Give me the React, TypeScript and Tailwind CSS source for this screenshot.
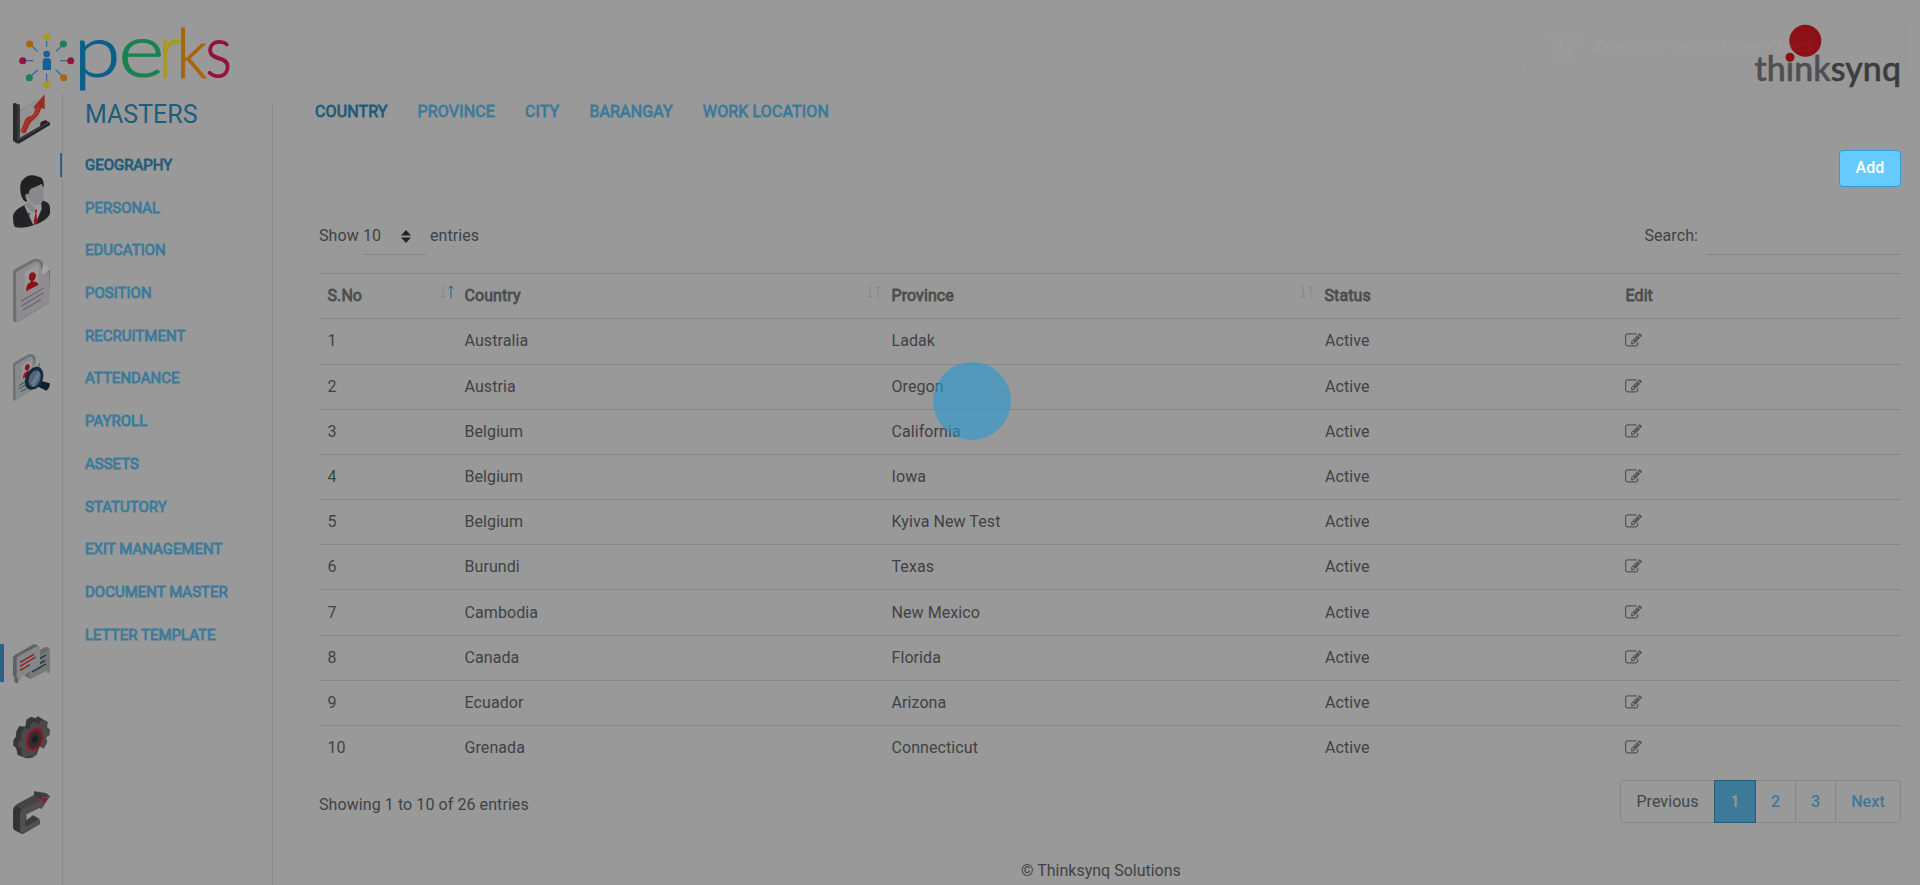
import React from "react";

const fauxBold = "[-webkit-text-stroke:0.8px_currentColor]";

const menu = [
  "GEOGRAPHY", "PERSONAL", "EDUCATION", "POSITION", "RECRUITMENT", "ATTENDANCE",
  "PAYROLL", "ASSETS", "STATUTORY", "EXIT MANAGEMENT", "DOCUMENT MASTER", "LETTER TEMPLATE",
];

const tabs = ["COUNTRY", "PROVINCE", "CITY", "BARANGAY", "WORK LOCATION"];

const rows = [
  ["Australia", "Ladak"],
  ["Austria", "Oregon"],
  ["Belgium", "California"],
  ["Belgium", "Iowa"],
  ["Belgium", "Kyiva New Test"],
  ["Burundi", "Texas"],
  ["Cambodia", "New Mexico"],
  ["Canada", "Florida"],
  ["Ecuador", "Arizona"],
  ["Grenada", "Connecticut"],
];

function PerksLogo() {
  const spokes = [
    { x: 140, y: 111, c: "#a89a1c", x1: 140, y1: 122, x2: 140, y2: 140 },
    { x: 190, y: 132, c: "#1a8250", x1: 184, y1: 139, x2: 168, y2: 154 },
    { x: 212, y: 182, c: "#93123c", x1: 204, y1: 182, x2: 180, y2: 182 },
    { x: 191, y: 233, c: "#a8650a", x1: 184, y1: 226, x2: 167, y2: 209 },
    { x: 140, y: 255, c: "#a89a1c", x1: 140, y1: 245, x2: 140, y2: 221 },
    { x: 88, y: 233, c: "#1a8250", x1: 95, y1: 226, x2: 113, y2: 210 },
    { x: 68, y: 182, c: "#93123c", x1: 76, y1: 182, x2: 100, y2: 182 },
    { x: 89, y: 132, c: "#a8650a", x1: 97, y1: 139, x2: 112, y2: 154 },
  ];
  return (
    <svg width="240" height="94" viewBox="0 0 240 94" className="block">
      <g transform="scale(0.33333)">
        {spokes.map((s, i) => (
          <g key={i}>
            <line x1={s.x1} y1={s.y1} x2={s.x2} y2={s.y2} stroke="#28659b" strokeWidth="3.5" />
            <circle cx={s.x} cy={s.y} r="10.5" fill={s.c} />
          </g>
        ))}
        <circle cx="140" cy="162" r="10" fill="#1b5f96" />
        <path d="M128 210V184q0-9 9-9h7q9 0 9 9v26z" fill="#155f94" />
      </g>
      <g fontFamily="Lato, sans-serif" fontWeight="300" fontSize="75" strokeWidth="1.1">
        <text transform="translate(73.800 76.800) scale(1.13 0.98)" fill="#0b5f8b" stroke="#0b5f8b">p</text>
        <text transform="translate(118.200 77) scale(1.18 1)" fill="#1a8250" stroke="#1a8250">e</text>
        <text transform="translate(158.500 77) scale(0.84 1)" fill="#a89a1c" stroke="#a89a1c">r</text>
        <text transform="translate(176.200 77.500) scale(0.86 0.93)" fill="#a8650a" stroke="#a8650a">k</text>
        <text transform="translate(205.300 77) scale(0.84 0.98)" fill="#93123c" stroke="#93123c">s</text>
      </g>
    </svg>
  );
}

function ThinksynqLogo() {
  return (
    <svg width="150" height="70" viewBox="1752 20 150 70" className="block">
      <text x="1754.500" y="81" fontFamily="Lato, sans-serif" fontSize="34.500" fontWeight="500" textLength="146.500" lengthAdjust="spacingAndGlyphs" strokeWidth="0.6">
        <tspan fill="#4f4f51" stroke="#4f4f51">think</tspan>
        <tspan fill="#3c3c3e" stroke="#3c3c3e">synq</tspan>
      </text>
      <circle cx="1805.300" cy="40.700" r="16" fill="#8e1017" />
      <circle cx="1790" cy="57.300" r="4.500" fill="#8e1017" />
    </svg>
  );
}

function ChartIcon() {
  return (
    <svg width="37" height="50" viewBox="39 282 111 150" className="block">
      <path d="M58 332 120 296V372L58 410z" fill="#929294" />
      <path d="M58 332 108 303" stroke="#808082" strokeWidth="2" />
      <path d="M39 312 44 308 58 315V413L52 431 39 422z" fill="#2a292b" />
      <path d="M52 316 60 313V411L52 419z" fill="#3b3a3c" />
      <path d="M52 418 120 378 122 366 136 360 150 368V375L55 432z" fill="#252426" />
      <path d="M54 420 148 367" stroke="#3d3c3e" strokeWidth="5" />
      <path d="M62 392C72 373 74 351 86 350S101 341 106 328L100 322 134 283V328L124 324C119 344 107 355 97 363S84 387 77 398Q67 404 62 392z" fill="#9a2e26" />
      <path d="M67 396C77 374 79 361 90 357S110 344 116 322" fill="none" stroke="#ac382d" strokeWidth="5" />
    </svg>
  );
}

function PersonIcon() {
  return (
    <svg width="37" height="53" viewBox="39 525 111 159" className="block">
      <path d="M39 648Q40 631 74 615L101 628 126 601Q150 607 150 623V641Q143 660 103 675 72 687 45 681 39 674 39 648z" fill="#232224" />
      <path d="M73 617 84 606 123 597 125 627 105 675 98 672z" fill="#9b9a9d" />
      <path d="M73 617 98 671 88 647 91 640 83 638z" fill="#3c3b3e" />
      <path d="M76 584Q82 570 91 570L126 545 131 555V598Q121 620 103 615L87 604V591L76 594z" fill="#89898c" />
      <path d="M64 587C59 570 59 547 68 540Q82 522 107 527L115 530Q130 530 131 553V563Q126 554 124 551C106 564 96 560 88 572L85 583Q76 578 76 591L82 604Q72 608 64 587z" fill="#202021" />
      <path d="M74 614 87 606 105 625 97 638z" fill="#858588" />
      <path d="M104 630 111 627 109 641 113 667 103 674 101 666 106 641z" fill="#971a1d" />
    </svg>
  );
}

function DocumentIcon() {
  return (
    <svg width="37" height="65" viewBox="39 55 111 195" className="block">
      <path d="M39 100Q38 94 45 88L101 58Q121 53 130 72L150 88 147 190 51 248Q43 249 39 244z" fill="#717173" />
      <path d="M48 103Q48 98 54 94L105 66Q123 62 124 92L147 100V189L49 247z" fill="#8e8c8e" />
      <path d="M124 102Q135 107 150 88L130 69z" fill="#a3a2a5" />
      <path d="M74 96 116 73V134L74 157z" fill="#999" />
      <ellipse cx="97" cy="111" rx="10" ry="13" transform="rotate(18 97 111)" fill="#8d1218" />
      <path d="M78 155Q78 133 91 128L96 119 99 126Q113 123 115 136z" fill="#8d1218" />
      <path d="M63 185 131 145M63 200 131 159M69 211 123 179" stroke="#515153" strokeWidth="2.600" />
    </svg>
  );
}

function InspectIcon() {
  return (
    <svg width="37" height="47" viewBox="39 342 111 141" className="block">
      <path d="M39 374Q39 370 45 366L86 343Q104 339 108 357L120 366V434L47 481Q42 484 39 478z" fill="#6d7173" />
      <path d="M45 376 87 350Q101 346 102 371L119 378V436L47 480z" fill="#858b8d" />
      <path d="M106 377Q113 379 120 366L107 354z" fill="#989ea0" />
      <path d="M65 376 96 358V405L65 421z" fill="#959799" />
      <ellipse cx="82" cy="382" rx="7" ry="10" transform="rotate(16 82 382)" fill="#8f151a" />
      <path d="M69 416Q69 399 78 396L85 391 89 405z" fill="#8f151a" />
      <path d="M57 437 76 426M57 446 80 433M63 455 79 446" stroke="#244650" strokeWidth="2.500" />
      <path d="M122 422 149 430Q151 443 139 452L112 439z" fill="#10202b" />
      <ellipse cx="104" cy="414" rx="25" ry="35" transform="rotate(20 104 414)" fill="#172d3b" />
      <ellipse cx="98" cy="418" rx="22" ry="32" transform="rotate(20 98 418)" fill="#132735" />
      <ellipse cx="104" cy="416" rx="17" ry="26" transform="rotate(20 104 416)" fill="#52657a" />
      <path d="M93 430 114 394 121 403 101 440z" fill="#6b7a8f" />
    </svg>
  );
}

function MessagesIcon() {
  return (
    <svg width="37" height="40" viewBox="39 12 111 120" className="block">
      <path d="M75 62 132 22 145 22 150 29V89L146 101 138 92 91 117 75 109z" fill="#6b6c6d" />
      <path d="M84 66 150 28V88L147 100 138 92 90 116z" fill="#777879" />
      <path d="M96 96 138 72M119 71 135 62M119 56 138 45" stroke="#1b3142" strokeWidth="4" />
      <path d="M39 53Q40 48 45 45L101 13Q108 11 116 19L54 115V131L43 125V112L39 106z" fill="#606162" />
      <path d="M50 57Q50 51 55 48L113 18Q120 15 120 25V76L67 107 54 128V113H50z" fill="#83898a" />
      <path d="M60 67 102 43M60 79 107 51M60 91 90 74" stroke="#961a20" strokeWidth="4" />
    </svg>
  );
}

function GearIcon() {
  return (
    <svg width="37" height="43" viewBox="39 228 111 129" className="block">
      <path d="M48 289 49 274 58 258 76 260 79 239 94 230 106 235 114 229 128 238 143 246 141 262 150 269 148 284 138 291 141 306 133 322 119 319 110 344 95 353 79 355 53 345 49 325 39 316 41 300z" fill="#383738" />
      <path d="M65 300 62 282 75 262 88 267 96 248 107 246 114 252 124 239 142 247 139 264 150 269 147 287 137 291 140 310 131 326 118 319 109 344 98 353 91 345 76 355 64 345 66 326 55 322 55 303z" fill="#4b494a" />
      <path d="M75 260 89 267M112 250 121 248M55 303 41 302M64 326 49 326" stroke="#302f30" strokeWidth="3" />
      <ellipse cx="104" cy="298" rx="24" ry="35" transform="rotate(20 104 298)" fill="#93151b" />
      <ellipse cx="104" cy="298" rx="18" ry="27" transform="rotate(20 104 298)" fill="#302f30" />
      <path d="M95 296 105 286 114 291 113 301 104 310 96 305z" fill="#1e1d1e" />
    </svg>
  );
}

function ReturnIcon() {
  return (
    <svg width="37" height="43" viewBox="39 453 111 129" className="block">
      <path d="M39 510Q40 500 50 493L102 465V454L138 459 150 469 123 507 119 503 79 523V553L105 536 120 542V552L73 580Q66 584 60 579L42 569Q39 565 39 561z" fill="#454344" />
      <path d="M39 512Q42 501 50 498L64 508Q60 514 60 522V578L43 570 39 562z" fill="#343334" />
      <path d="M60 524Q62 508 75 504L125 479V503L119 501 78 521Q75 524 75 531V555L119 537V552L72 580 60 577z" fill="#524f51" />
      <path d="M75 544 99 526 119 537 77 560z" fill="#3d3b3c" />
      <path d="M102 454 148 470 124 477 103 466z" fill="#3d3b3c" />
      <path d="M125 472 150 469 125 507z" fill="#555" />
      <path d="M127 475 143 473 128 496z" fill="#98161c" />
    </svg>
  );
}

function EditIcon() {
  return (
    <svg width="17" height="17" viewBox="0 0 1792 1792" fill="#545454" className="-mt-px block">
      <path d="M888 1184l116-116-152-152-116 116v56h96v96h56zm440-720q-16-16-33 1l-350 350q-17 17-1 33t33-1l350-350q17-17 1-33zm80 594v190q0 119-84.500 203.500t-203.500 84.500h-832q-119 0-203.500-84.500t-84.500-203.500v-832q0-119 84.500-203.500t203.500-84.500h832q63 0 117 25 15 7 18 23 3 17-9 29l-49 49q-14 14-32 8-23-6-45-6h-832q-66 0-113 47t-47 113v832q0 66 47 113t113 47h832q66 0 113-47t47-113v-126q0-13 9-22l64-64q15-15 35-7t20 29zm-96-738l288 288-672 672h-288v-288zm444 132l-92 92-288-288 92-92q28-28 68-28t68 28l152 152q28 28 28 68t-28 68z" />
    </svg>
  );
}

function SortArrows({ asc = false }: { asc?: boolean }) {
  return (
    <svg width="14" height="14" viewBox="0 0 14 14" fill="none" className="mr-[2px] mt-[11px] self-start">
      <path d="M3 0.500V12.500M0.500 10.500 3 13 5.500 10.500" stroke="#858585" />
      <path d="M11 13.500V1.500M8.500 3.500 11 1 13.500 3.500" stroke={asc ? "#1b678f" : "#858585"} />
    </svg>
  );
}

const grid = "grid grid-cols-[137px_427px_433px_301px_284px] items-center";

function DataTable() {
  return (
    <div className="mt-[18.150px] w-[1582px]">
      <div className={`${grid} h-[45.200px] border-t border-[#85888a] text-[#4d4d4d]`}>
        {["S.No", "Country", "Province", "Status", "Edit"].map((h, i) => (
          <div key={h} className="flex h-full items-center justify-between pl-[8.500px]">
            <span className={fauxBold}>{h}</span>
            {i < 3 && <SortArrows asc={i === 0} />}
          </div>
        ))}
      </div>
      {rows.map(([country, province], i) => (
        <div key={i} className={`${grid} h-[45.200px] border-t border-[#85888a]`}>
          <span className="pl-[8.500px]">{i + 1}</span>
          <span className="pl-[8.500px]">{country}</span>
          <span className="pl-[8.500px]">{province}</span>
          <span className="pl-[9px]">Active</span>
          <span className="pl-[7.500px]"><EditIcon /></span>
        </div>
      ))}
    </div>
  );
}

export default function App() {
  return (
    <div className="relative flex h-[885px] w-full flex-col overflow-hidden bg-[#999] font-['Roboto',sans-serif] text-base tracking-[0.08px] text-[#3f4244]">
      <header className="flex h-[94px] shrink-0 justify-between">
        <PerksLogo />
        <div className="pr-[18px] pt-5"><ThinksynqLogo /></div>
      </header>

      <div className="flex min-h-0 flex-1">
        <nav className="flex w-[63px] shrink-0 flex-col border-r border-[#8b8b8c] pl-[13px]">
          <ChartIcon />
          <div className="mt-[31px]"><PersonIcon /></div>
          <div className="mt-[30px]"><DocumentIcon /></div>
          <div className="mt-[31px]"><InspectIcon /></div>
          <div className="-ml-[13px] mt-[243px] flex h-10 gap-[9px]">
            <div className="h-[38px] w-1 bg-[#2d6485]" />
            <MessagesIcon />
          </div>
          <div className="mt-8"><GearIcon /></div>
          <div className="mt-8"><ReturnIcon /></div>
        </nav>

        <aside className="mt-[9px] w-[210px] shrink-0 border-r border-[#8b8b8c] tracking-normal">
          <h1 className="ml-[22px] mt-[-4px] h-[32px] text-[25px] leading-8 text-[#1f5c7a]">MASTERS</h1>
          <ul className="mt-[12.700px]">
            {menu.map((m, i) => (
              <li key={m} className={`relative flex h-[42.730px] items-center pl-[22px] text-[15px] ${fauxBold} ${i === 0 ? "text-[#1f5c7a]" : "text-[#3d7a99]"}`}>
                {i === 0 && <span className="absolute -left-[3px] top-[9.300px] h-6 w-0.5 bg-[#2d6485]" />}
                {m}
              </li>
            ))}
          </ul>
        </aside>

        <main className="flex min-w-0 flex-1 flex-col">
          <div className="ml-[42px] mt-[6px] flex h-6 items-center gap-[30px] tracking-[0.14px]">
            {tabs.map((t, i) => (
              <span key={t} className={`${fauxBold} ${i === 0 ? "text-[#1f5c7a]" : "text-[#3d7a99]"}`}>{t}</span>
            ))}
          </div>
          <div className="mt-[26px] flex justify-end pr-[19px]">
            <button className="h-[37px] w-[62px] rounded border border-[#3399d1] bg-[#66ccff] pb-px font-medium text-white">Add</button>
          </div>

          <div className="ml-[46px] mt-[30px] flex h-[38px] w-[1582px] justify-between">
            <div className="flex">
              <span className="w-11 leading-[38px]">Show</span>
              <div className="flex w-[63px] items-center justify-between border-b border-[#858585] pr-[15px] pt-px">
                <span>10</span>
                <svg width="10" height="13" viewBox="0 0 10 13" fill="#20252a"><path d="M0 5.500 5 0l5 5.500zM0 7.500h10L5 13z" /></svg>
              </div>
              <span className="pl-1 leading-[38px]">entries</span>
            </div>
            <div className="flex">
              <span className="leading-[38px]">Search:</span>
              <div className="ml-2 w-[195px] border-b border-[#858585]" />
            </div>
          </div>

          <div className="ml-[46px]">
            <DataTable />
            <div className="mt-[9.350px] flex w-[1582px] justify-between">
              <span className="mt-[13px] h-6 leading-6">Showing 1 to 10 of 26 entries</span>
              <div className="flex h-[43px] w-[281px] items-stretch text-center font-medium leading-[41px] text-[#3d7a99]">
                <span className="w-[94px] rounded-l border border-r-0 border-[#85888a] font-normal text-[#41464b]">Previous</span>
                <span className="w-[42px] border border-[#1f5c7a] bg-[#3d7a99] text-[#999]">1</span>
                <span className="w-[40px] border border-l-0 border-[#85888a]">2</span>
                <span className="w-[40px] border border-l-0 border-[#85888a]">3</span>
                <span className="w-[65px] rounded-r border border-l-0 border-[#85888a]">Next</span>
              </div>
            </div>
          </div>
          <footer className="ml-[748px] mt-[36px] h-6 leading-6 tracking-normal">© Thinksynq Solutions</footer>
        </main>
      </div>

      <div className="absolute left-[1526px] top-[10px] flex h-[75px] w-[381px] items-center rounded-2xl border border-black/50 pb-[2px] pl-[24px] text-[17px] text-white opacity-[0.022]">
        <svg width="28" height="30" viewBox="0 0 30 32" fill="currentColor">
          <path fillRule="evenodd" d="M0 3Q9 6 15 0Q21 6 30 3Q30 26 15 32Q0 26 0 3zM13 8V19H18V8zM13 22V26H18V22z" />
        </svg>
        <span className="ml-[16px] font-medium">Duplicate Data Please Check</span>
      </div>
      <div className="absolute left-[933px] top-[362px] size-[78px] rounded-full bg-[#2699d2]/60" />
    </div>
  );
}
